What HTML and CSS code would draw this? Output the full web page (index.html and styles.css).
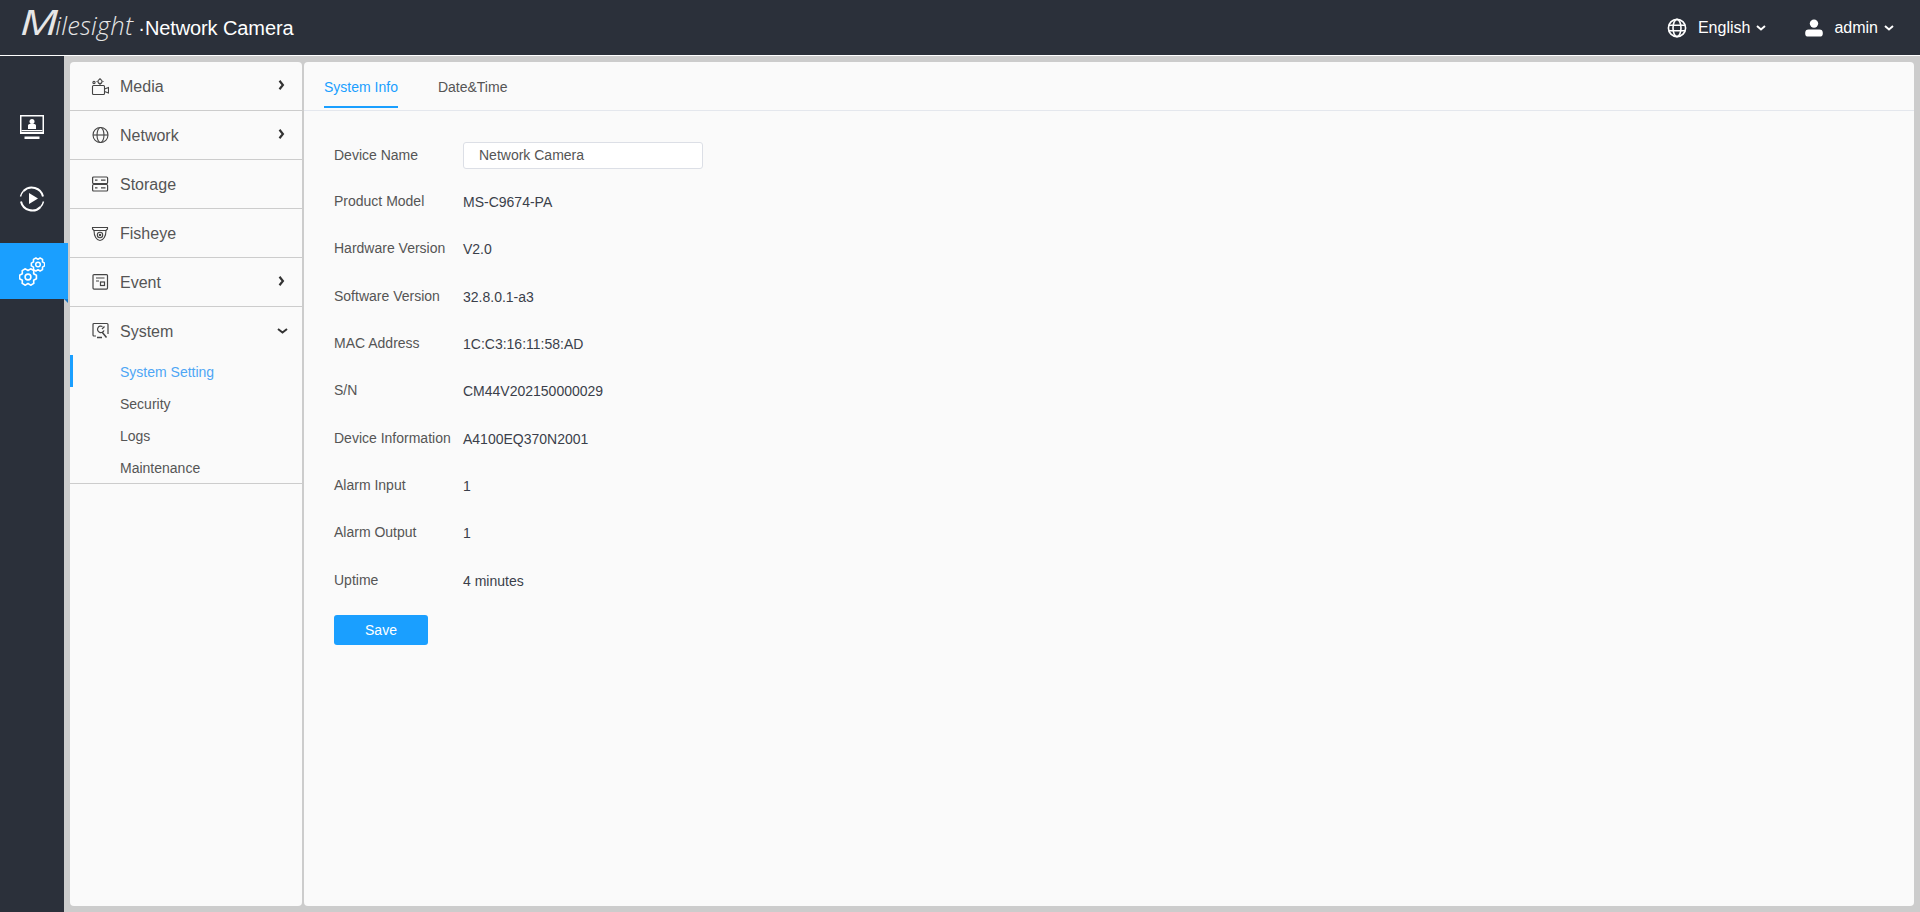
FILE: index.html
```html
<!DOCTYPE html>
<html lang="en">
<head>
    <meta charset="UTF-8">
    <title>Network Camera</title>
    <link rel="stylesheet" href="styles.css">
</head>
<body>
    <header class="topbar">
        <div class="brand">
            <span class="logo"><span class="logo-m">M</span>ilesight</span>
            <span class="brand-dot">·</span>
            <span class="brand-name">Network Camera</span>
        </div>
        <div class="top-right">
            <div class="top-item lang">
                <svg class="top-icon" viewBox="0 0 20 20" width="20" height="20" fill="none" stroke="#fff" stroke-width="1.6">
                    <circle cx="10" cy="10" r="8.6"/>
                    <ellipse cx="10" cy="10" rx="4" ry="8.6"/>
                    <path d="M1.6 7.2h16.8M1.6 12.8h16.8"/>
                </svg>
                <span>English</span>
                <svg class="caret" viewBox="0 0 10 6" width="10" height="6" fill="none" stroke="#fff" stroke-width="2"><path d="M1 1l4 3.4L9 1"/></svg>
            </div>
            <div class="top-item user">
                <svg class="top-icon" viewBox="0 0 18 18" width="18" height="18" fill="#fff">
                    <circle cx="9" cy="4.6" r="4.2"/>
                    <path d="M3.6 10.4h10.8a3.4 3.4 0 0 1 3.4 3.4v.6a3.2 3.2 0 0 1-3.2 3.2H3.4A3.2 3.2 0 0 1 .2 14.4v-.6a3.4 3.4 0 0 1 3.4-3.4z"/>
                </svg>
                <span>admin</span>
                <svg class="caret" viewBox="0 0 10 6" width="10" height="6" fill="none" stroke="#fff" stroke-width="2"><path d="M1 1l4 3.4L9 1"/></svg>
            </div>
        </div>
    </header>

    <main class="layout">
        <nav class="rail">
            <div class="rail-item">
                <svg viewBox="0 0 24 24" width="24" height="24">
                    <path fill="#fff" d="M0 0h24v19H0z"/>
                    <path fill="#2b303a" d="M1.500 1.500h21v15.500h-21z"/>
                    <circle cx="12" cy="6.400" r="2.500" fill="#fff"/>
                    <path fill="#fff" d="M8 14v-3.400q0-1.600 1.600-1.600h4.800q1.600 0 1.600 1.600V14zM1.500 15h21v1.200h-21zM4.500 21.500h15V24h-15z"/>
                </svg>
            </div>
            <div class="rail-item">
                <svg viewBox="0 0 26 26" width="26" height="26" fill="none" stroke="#fff" stroke-width="2">
                    <path d="M24 10.500A11.500 11.500 0 0 0 4.500 5M2 15.500A11.500 11.500 0 0 0 21.500 21"/>
                    <path d="M24.500 15.500a11.500 11.500 0 0 1-3 5.500M1.500 10.500a11.500 11.500 0 0 1 3-5.500" stroke-width="1.400"/>
                    <path fill="#fff" stroke="none" d="M10 7l9 5.500-9 5.500z"/>
                </svg>
            </div>
            <div class="rail-item active">
                <svg viewBox="0 0 26 29" width="26" height="29" fill="none" stroke="#fff">
                    <defs>
                        <polygon id="gear" stroke-linejoin="round" points="9.78,-2.08 9.78,2.08 6.58,3.8 6.69,7.43 3.09,9.51 0,7.6 -3.09,9.51 -6.69,7.43 -6.58,3.8 -9.78,2.08 -9.78,-2.08 -6.58,-3.8 -6.69,-7.43 -3.09,-9.51 0,-7.6 3.09,-9.51 6.69,-7.43 6.58,-3.8"/>
                    </defs>
                    <use href="#gear" transform="translate(9 20) scale(.86)" stroke-width="1.900"/>
                    <circle cx="9" cy="20" r="2.900" stroke-width="1.600"/>
                    <use href="#gear" transform="translate(19 7.500) scale(.68)" stroke-width="2.300"/>
                    <circle cx="19" cy="7.500" r="2.300" stroke-width="1.500"/>
                </svg>
            </div>
        </nav>

        <aside class="side-panel">
            <div class="menu-row">
                <svg class="menu-icon" viewBox="0 0 18 18" width="18" height="18" fill="none" stroke="#444" stroke-width="1.100">
                    <rect x="1.500" y="8.500" width="12" height="9" rx="1"/>
                    <path d="M13.500 12l4-1.500v5.500l-4-1.500"/>
                    <circle cx="9" cy="4.500" r="2"/>
                    <path d="M9 1v1M9 7v1M5.500 4.500h1M11.500 4.500h1" />
                    <circle cx="3" cy="5.500" r="1.100"/>
                </svg>
                <span class="menu-label">Media</span>
                <svg class="arrow" viewBox="0 0 7 10" width="7" height="10" fill="none" stroke="#333" stroke-width="2.200"><path d="M1.500 .8l3.400 4.200-3.400 4.200"/></svg>
            </div>
            <div class="menu-row">
                <svg class="menu-icon" viewBox="0 0 18 18" width="18" height="18" fill="none" stroke="#444" stroke-width="1.100">
                    <circle cx="9.500" cy="9" r="7.500"/>
                    <ellipse cx="9.500" cy="9" rx="3.500" ry="7.500"/>
                    <path d="M2 9h15"/>
                </svg>
                <span class="menu-label">Network</span>
                <svg class="arrow" viewBox="0 0 7 10" width="7" height="10" fill="none" stroke="#333" stroke-width="2.200"><path d="M1.500 .8l3.400 4.200-3.400 4.200"/></svg>
            </div>
            <div class="menu-row">
                <svg class="menu-icon" viewBox="0 0 18 18" width="18" height="18" fill="none" stroke="#444" stroke-width="1.200">
                    <rect x="1.600" y="2" width="15" height="6.500" rx="1"/>
                    <rect x="1.600" y="9.500" width="15" height="6.500" rx="1"/>
                    <path d="M4 5.200h2.500M10 5.200h4.500M4 12.800h2.500M10 12.800h4.500"/>
                </svg>
                <span class="menu-label">Storage</span>
            </div>
            <div class="menu-row">
                <svg class="menu-icon" viewBox="0 0 18 18" width="18" height="18" fill="none" stroke="#444" stroke-width="1.100">
                    <path d="M1.500 3.500h15v1.500l-1.500 1.500H3L1.500 5z"/>
                    <path d="M3 6.500c0 5.500 2.500 10 6 10s6-4.500 6-10"/>
                    <circle cx="9" cy="11" r="2.700"/>
                    <circle cx="9" cy="11" r=".7"/>
                </svg>
                <span class="menu-label">Fisheye</span>
            </div>
            <div class="menu-row">
                <svg class="menu-icon" viewBox="0 0 18 18" width="18" height="18" fill="none" stroke="#444" stroke-width="1.200">
                    <rect x="2" y="1.600" width="14.500" height="14.500" rx="1"/>
                    <path d="M5 5h8.500M5 8h3"/>
                    <rect x="9.500" y="9" width="4" height="3.500"/>
                </svg>
                <span class="menu-label">Event</span>
                <svg class="arrow" viewBox="0 0 7 10" width="7" height="10" fill="none" stroke="#333" stroke-width="2.200"><path d="M1.500 .8l3.400 4.200-3.400 4.200"/></svg>
            </div>
            <div class="menu-group">
                <div class="menu-row open">
                    <svg class="menu-icon" viewBox="0 0 18 18" width="18" height="18" fill="none" stroke="#444" stroke-width="1.200">
                        <path d="M5 14H3a1 1 0 0 1-1-1V2.500a1 1 0 0 1 1-1h13a1 1 0 0 1 1 1V12"/>
                        <path d="M11.500 4.500a3.300 3.300 0 1 0 1.500 3.800M13.500 4.500l-2.500 2.500"/>
                        <path d="M11 10l4.500 5.500M6 15.500h5" stroke-width="1.500"/>
                    </svg>
                    <span class="menu-label">System</span>
                    <svg class="arrow-down" viewBox="0 0 11 6" width="11" height="6" fill="none" stroke="#333" stroke-width="2"><path d="M1 1l4.500 3.500L10 1"/></svg>
                </div>
                <ul class="submenu">
                    <li class="current">System Setting</li>
                    <li>Security</li>
                    <li>Logs</li>
                    <li>Maintenance</li>
                </ul>
            </div>
        </aside>

        <section class="content">
            <div class="tabs">
                <span class="tab selected">System Info</span>
                <span class="tab">Date&amp;Time</span>
            </div>
            <form class="info-form">
                <div class="form-row first">
                    <label>Device Name</label>
                    <input class="name-input" type="text" value="Network Camera">
                </div>
                <div class="form-row"><label>Product Model</label><span class="val">MS-C9674-PA</span></div>
                <div class="form-row"><label>Hardware Version</label><span class="val">V2.0</span></div>
                <div class="form-row"><label>Software Version</label><span class="val">32.8.0.1-a3</span></div>
                <div class="form-row"><label>MAC Address</label><span class="val">1C:C3:16:11:58:AD</span></div>
                <div class="form-row"><label>S/N</label><span class="val">CM44V202150000029</span></div>
                <div class="form-row"><label>Device Information</label><span class="val">A4100EQ370N2001</span></div>
                <div class="form-row"><label>Alarm Input</label><span class="val">1</span></div>
                <div class="form-row"><label>Alarm Output</label><span class="val">1</span></div>
                <div class="form-row"><label>Uptime</label><span class="val">4 minutes</span></div>
                <button class="save-btn" type="button">Save</button>
            </form>
        </section>
    </main>
</body>
</html>
```

FILE: styles.css
```css
html,body{
    margin: 0;
    height: 100%;
}
body{
    display: flex;
    flex-direction: column;
    height: 912px;
    overflow: hidden;
    font-family: "Liberation Sans", Arial, sans-serif;
    background-color: #ccc;
    color: #555;
}
.topbar{
    flex: none;
    height: 55px;
    border-bottom: 1px solid #fff;
    background-color: #2b303a;
    color: #fff;
    display: flex;
    align-items: center;
    justify-content: space-between;
    padding: 0 20px;
}
.brand{
    display: flex;
    align-items: baseline;
    padding-bottom: 10px;
}
.logo{
    font-family: "Open Sans", sans-serif;
    font-style: italic;
    font-weight: 300;
    font-size: 25.500px;
    letter-spacing: .2px;
    color: #e6e6e6;
}
.logo-m{
    display: inline-block;
    font-size: 35px;
    font-weight: 400;
    line-height: 1;
    transform: scaleX(1.300);
    transform-origin: left;
    margin-right: 6px;
    letter-spacing: 0;
}
.brand-dot{
    margin-left: 5px;
    font-size: 20px;
}
.brand-name{
    font-size: 20px;
    margin-left: 0;
    letter-spacing: -.1px;
}
.top-right{
    display: flex;
    align-items: center;
    font-size: 16px;
}
.top-item{
    display: flex;
    align-items: center;
}
.lang{
    margin-right: 39px;
}
.user{
    margin-right: 6px;
}
.top-icon{
    margin-right: 11px;
}
.caret{
    margin-left: 6px;
}

.layout{
    flex: 1;
    display: flex;
    min-height: 0;
    padding-bottom: 6px;
}
.rail{
    flex: none;
    width: 64px;
    margin-bottom: -6px;
    padding-top: 43px;
    box-sizing: border-box;
    background-color: #2b303a;
    display: flex;
    flex-direction: column;
    gap: 16px;
    position: relative;
}
.rail-item{
    height: 56px;
    display: flex;
    align-items: center;
    justify-content: center;
    width: 64px;
    position: relative;
}
.rail-item.active{
    width: 68px;
    padding-right: 4px;
    box-sizing: border-box;
    background-color: #1a9fff;
    z-index: 1;
}
/* little fold under the blue block */
.rail-item.active::after{
    content: "";
    position: absolute;
    right: 0;
    top: 100%;
    border-top: 4px solid #1677c8;
    border-left: 4px solid transparent;
}

.side-panel{
    flex: none;
    width: 232px;
    margin: 6px 2px 0 6px;
    background-color: #fafafa;
    border-radius: 4px;
}
.menu-row{
    height: 47px;
    padding-top: 1px;
    border-bottom: 1px solid #ccc;
    display: flex;
    align-items: center;
    padding-left: 21px;
    position: relative;
    font-size: 16px;
}
.menu-group{
    border-bottom: 1px solid #ccc;
}
.menu-row.open{
    border-bottom: none;
}
.menu-icon{
    flex: none;
    margin-right: 11px;
    margin-bottom: 2px;
}
.arrow{
    position: absolute;
    right: 17px;
    top: 18px;
}
.arrow-down{
    position: absolute;
    right: 14px;
    top: 21px;
}
.submenu{
    margin: 0;
    padding: 0;
    list-style: none;
    font-size: 14px;
}
.submenu li{
    height: 31px;
    padding-top: 1px;
    line-height: 32px;
    padding-left: 50px;
}
.submenu .current{
    color: #4ea6f5;
    border-left: 3px solid #1a9fff;
    padding-left: 47px;
}

.content{
    flex: 1;
    margin: 6px 6px 0 0;
    background-color: #fafafa;
    border-radius: 4px;
    font-size: 14px;
    min-width: 0;
}
.tabs{
    height: 48px;
    border-bottom: 1px solid #e4e7ed;
    display: flex;
    gap: 40px;
    padding-left: 20px;
}
.tab{
    height: 44px;
    line-height: 50px;
}
.tab.selected{
    color: #1a9fff;
    border-bottom: 2px solid #1a9fff;
}
.info-form{
    padding: 31px 0 0 30px;
}
.form-row{
    display: flex;
    align-items: center;
    height: 47.300px;
}
.form-row.first{
    height: 27px;
    margin-bottom: 9.500px;
}
.form-row label{
    width: 129px;
    flex: none;
    position: relative;
    top: -1px;
}
.val{
    color: #3a3f4a;
}
.name-input{
    width: 240px;
    height: 27px;
    box-sizing: border-box;
    padding: 0 15px 1px;
    border: 1px solid #dcdfe6;
    border-radius: 3px;
    background-color: #fff;
    font: inherit;
    color: #555;
}
.save-btn{
    display: block;
    width: 94px;
    height: 30px;
    margin-top: 11px;
    border: none;
    border-radius: 3px;
    background-color: #1a9fff;
    color: #fff;
    font: inherit;
}
```
